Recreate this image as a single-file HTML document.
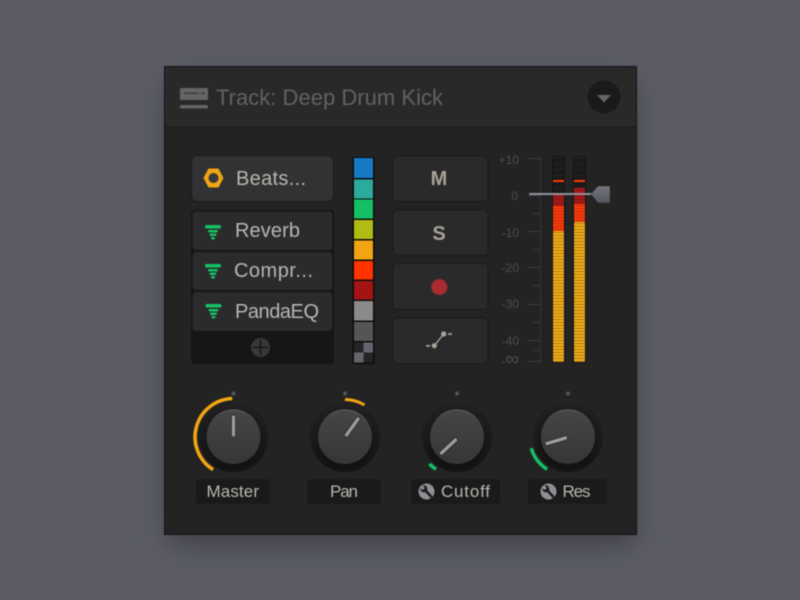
<!DOCTYPE html>
<html><head><meta charset="utf-8"><style>
html,body{margin:0;padding:0;width:800px;height:600px;overflow:hidden;background:#5b5c65}
svg{display:block;filter:blur(.4px)}
text{font-family:"Liberation Sans",sans-serif}
</style></head><body>
<svg width="800" height="600" viewBox="0 0 800 600" xmlns="http://www.w3.org/2000/svg">
<defs>
<filter id="ps" x="-30%" y="-30%" width="160%" height="160%"><feGaussianBlur stdDeviation="14"/></filter>
<filter id="ks" x="-40%" y="-40%" width="180%" height="180%"><feGaussianBlur stdDeviation="3"/></filter>
<linearGradient id="kn" x1="0" y1="0" x2="0" y2="1"><stop offset="0" stop-color="#464648"/><stop offset="1" stop-color="#363638"/></linearGradient>
<linearGradient id="rim" x1="0" y1="0" x2="0" y2="1"><stop offset="0" stop-color="#66666a"/><stop offset=".3" stop-color="#464648" stop-opacity="0"/></linearGradient>
<linearGradient id="ring" x1="0" y1="0" x2="0" y2="1"><stop offset="0" stop-color="#212122"/><stop offset="1" stop-color="#141415"/></linearGradient>
<linearGradient id="hd" x1="0" y1="0" x2="0" y2="1"><stop offset="0" stop-color="#74757e"/><stop offset="1" stop-color="#55565e"/></linearGradient>
<pattern id="po" width="3" height="3" patternUnits="userSpaceOnUse" y="1"><rect width="3" height="3" fill="#f5ac14"/><rect width="3" height="1" fill="#a87a24"/></pattern>
<pattern id="pr" width="3" height="3" patternUnits="userSpaceOnUse" y="1"><rect width="3" height="3" fill="#ff3a08"/><rect width="3" height="1" fill="#b8300c"/></pattern>
<pattern id="pd" width="3" height="3" patternUnits="userSpaceOnUse" y="1"><rect width="3" height="3" fill="#a8181a"/><rect width="3" height="1" fill="#801818"/></pattern>
<pattern id="pk" width="3" height="6" patternUnits="userSpaceOnUse" y="1"><rect width="3" height="6" fill="#1a1a1a"/><rect width="3" height="1" fill="#262626"/></pattern>
</defs>

<rect x="168" y="82" width="466" height="462" fill="#000" opacity=".32" filter="url(#ps)"/>
<rect x="164.500" y="66.500" width="472" height="468" fill="#232323" stroke="#141414"/>
<rect x="165" y="67" width="471" height="60" fill="#29292a"/>
<rect x="165" y="127" width="471" height="1" fill="#181818"/>

<!-- header -->
<rect x="180" y="88" width="28" height="12" rx="1.500" fill="#646466"/>
<rect x="184" y="92.500" width="15" height="1.500" fill="#3c3c3e"/><rect x="201" y="92.500" width="4" height="1.500" fill="#3c3c3e"/>
<rect x="180" y="105" width="28" height="3.500" rx="1.500" fill="#646466"/>
<text x="216" y="105" font-size="22" fill="#626260" textLength="227" lengthAdjust="spacing">Track: Deep Drum Kick</text>
<circle cx="604" cy="97" r="16.500" fill="#1a1a1b"/>
<path d="M597 95H611L604 102.500Z" fill="#666"/>

<!-- beats -->
<rect x="191.500" y="155.500" width="142" height="46" rx="5" fill="#323234" stroke="#1a1a1a"/>
<path d="M203.500 178L208.500 168.500H218.500L223.500 178L218.500 187.500H208.500Z" fill="#eea414"/>
<circle cx="213.500" cy="178" r="5" fill="#38383a"/>
<text x="236" y="185" font-size="20" fill="#b9b6ae" textLength="70">Beats...</text>

<!-- fx list -->
<rect x="191" y="210" width="143" height="154" rx="4" fill="#161616"/>
<rect x="192.500" y="211.500" width="140" height="38.500" rx="4" fill="#2b2b2d"/>
<rect x="192.500" y="252" width="140" height="38" rx="4" fill="#2b2b2d"/>
<rect x="192.500" y="292" width="140" height="39" rx="4" fill="#2b2b2d"/>
<g fill="#16c064">
<g transform="translate(0,225)"><rect x="205" y="0" width="16" height="3.500" rx="1.500"/><rect x="208" y="5" width="10" height="2.500" rx="1.200"/><rect x="209.500" y="8.500" width="7" height="2.500" rx="1.200"/><rect x="211" y="12" width="4" height="2.500" rx="1.200"/></g>
<g transform="translate(0,264)"><rect x="205" y="0" width="16" height="3.500" rx="1.500"/><rect x="208" y="5" width="10" height="2.500" rx="1.200"/><rect x="209.500" y="8.500" width="7" height="2.500" rx="1.200"/><rect x="211" y="12" width="4" height="2.500" rx="1.200"/></g>
<g transform="translate(0,304)"><rect x="205.500" y="0" width="16" height="3.500" rx="1.500"/><rect x="208.500" y="5" width="10" height="2.500" rx="1.200"/><rect x="210" y="8.500" width="7" height="2.500" rx="1.200"/><rect x="211.500" y="12" width="4" height="2.500" rx="1.200"/></g>
</g>
<g font-size="20" fill="#b9b6ae">
<text x="235" y="237" textLength="65">Reverb</text>
<text x="234" y="277" textLength="79">Compr...</text>
<text x="235" y="318" textLength="84">PandaEQ</text>
</g>
<circle cx="260.500" cy="347.500" r="9.500" fill="#38383a"/>
<path d="M260.500 340V355M253 347.500H268" stroke="#161616" stroke-width="1.500"/>

<!-- swatches -->
<rect x="352.500" y="157" width="22" height="207" rx="1" fill="#0c0c0c"/>
<rect x="354" y="158" width="19" height="20" fill="#1579c4"/>
<rect x="354" y="179.500" width="19" height="19" fill="#2bab9b"/>
<rect x="354" y="199.500" width="19" height="19" fill="#14bf66"/>
<rect x="354" y="220" width="19" height="19" fill="#b0bb14"/>
<rect x="354" y="240.500" width="19" height="19" fill="#f2a512"/>
<rect x="354" y="261" width="19" height="18.500" fill="#ff3200"/>
<rect x="354" y="281" width="19" height="18.500" fill="#a51414"/>
<rect x="354" y="301" width="19" height="19.500" fill="#8a8a8a"/>
<rect x="354" y="322" width="19" height="19" fill="#555555"/>
<rect x="354" y="342.500" width="19" height="20" fill="#252525"/>
<rect x="363.500" y="342.500" width="9.500" height="10" fill="#65656e"/>
<rect x="354" y="352.500" width="9.500" height="10" fill="#65656e"/>

<!-- buttons -->
<g fill="#2a2a2c" stroke="#1a1a1a">
<rect x="393" y="156" width="95" height="45.500" rx="4"/>
<rect x="393" y="210" width="95" height="45.500" rx="4"/>
<rect x="393" y="263.500" width="95" height="46" rx="4"/>
<rect x="393" y="318" width="95" height="45.500" rx="4"/>
</g>
<text x="439" y="185" font-size="20" font-weight="700" fill="#a8a297" text-anchor="middle">M</text>
<text x="439" y="240" font-size="20" font-weight="700" fill="#a8a297" text-anchor="middle">S</text>
<circle cx="439.300" cy="287" r="8" fill="#a92c31"/>
<g fill="#a8a297">
<circle cx="434.300" cy="345.700" r="2.600"/><circle cx="443.700" cy="334" r="2.600"/>
<rect x="426" y="345" width="4" height="1.700"/><rect x="448" y="333.200" width="4" height="1.700"/>
</g>
<path d="M434.300 345.700L443.700 334" stroke="#a8a297" stroke-width="1.300"/>

<!-- scale -->
<g fill="none">
<path d="M540.500 158V361.500" stroke="#343434"/>
<path d="M528 158.500H541M528 195.500H541M528 231.500H541M528 267.500H541M528 304.500H541M528 340.500H541M528 361.500H541" stroke="#3c3c3c"/>
<path d="M533 213.500H540M533 249.500H540M533 285.500H540M533 322.500H540M533 350.500H540" stroke="#3c3c3c"/>
</g>
<g font-size="12" fill="#4e4e4e" text-anchor="end">
<text x="519" y="164">+10</text>
<text x="518" y="200">0</text>
<text x="519" y="237">-10</text>
<text x="519" y="272">-20</text>
<text x="519" y="308">-30</text>
<text x="519" y="345">-40</text>
<text x="519" y="365">-<tspan font-size="19">∞</tspan></text>
</g>

<!-- meters -->
<rect x="552" y="156" width="13" height="207" rx="2" fill="#131313"/>
<rect x="573" y="156" width="13" height="207" rx="2" fill="#131313"/>
<rect x="553" y="157" width="11" height="38" fill="url(#pk)"/>
<rect x="574" y="157" width="11" height="31" fill="url(#pk)"/>
<rect x="553" y="180" width="11" height="2" fill="#ff3a08"/>
<rect x="574" y="180" width="11" height="2" fill="#ff3a08"/>
<rect x="553" y="195" width="11" height="11" fill="url(#pd)"/>
<rect x="553" y="206" width="11" height="25" fill="url(#pr)"/>
<rect x="553" y="231" width="11" height="131" rx="1" fill="url(#po)"/>
<rect x="574" y="188" width="11" height="16" fill="url(#pd)"/>
<rect x="574" y="204" width="11" height="18" fill="url(#pr)"/>
<rect x="574" y="222" width="11" height="140" rx="1" fill="url(#po)"/>

<!-- fader -->
<rect x="529" y="193" width="64" height="2" rx="1" fill="#8f949c"/>
<path d="M591 194L597.500 186.500Q598 186 599 186H610V203H599Q598 203 597.500 202.500Z" fill="url(#hd)" stroke="#2a2a2c" stroke-width=".5"/>

<!-- knobs -->
<g fill="#55555b"><circle cx="233.500" cy="393.500" r="2"/><circle cx="345" cy="393.500" r="2"/><circle cx="457" cy="393.500" r="2"/><circle cx="568" cy="393.500" r="2"/></g>
<g fill="url(#ring)">
<circle cx="233.500" cy="437" r="35"/><circle cx="345" cy="437" r="35"/><circle cx="457" cy="437" r="35"/><circle cx="568" cy="437" r="35"/>
</g>
<g fill="#000" opacity=".3" filter="url(#ks)">
<circle cx="233.500" cy="440" r="27"/><circle cx="345" cy="440" r="27"/><circle cx="457" cy="440" r="27"/><circle cx="568" cy="440" r="27"/>
</g>
<g fill="url(#kn)" stroke="url(#rim)">
<circle cx="233.500" cy="437" r="27"/><circle cx="345" cy="437" r="27"/><circle cx="457" cy="437" r="27"/><circle cx="568" cy="437" r="27"/>
</g>
<g fill="none" stroke-width="3.500">
<path d="M232.200 398.500A38.500 38.500 0 0 0 213.100 469.600" stroke="#f2a512"/>
<path d="M345 399.500A38 38 0 0 1 364.500 405" stroke="#f2a512" stroke-width="3"/>
<path d="M429.500 464A38.500 38.500 0 0 0 436 469.300" stroke="#14bf66"/>
<path d="M531.200 448.300A38.500 38.500 0 0 0 547 469.300" stroke="#14bf66"/>
</g>
<g stroke="#1f1f20" stroke-width="5" stroke-linecap="round" opacity=".7">
<path d="M233.500 417V435"/>
<path d="M358 419L346.500 435"/>
<path d="M455.500 440L441.500 453"/>
<path d="M565.500 438L547 443.500"/>
</g>
<g stroke="#9c9c9c" stroke-width="3.300" stroke-linecap="round">
<path d="M233.500 417V435"/>
<path d="M358 419L346.500 435"/>
<path d="M455.500 440L441.500 453"/>
<path d="M565.500 438L547 443.500"/>
</g>

<!-- labels -->
<g fill="#1a1a1b">
<rect x="196" y="479" width="74" height="25" rx="3"/>
<rect x="307" y="479" width="74" height="25" rx="3"/>
<rect x="411" y="479" width="89" height="25" rx="3"/>
<rect x="528" y="479" width="79" height="25" rx="3"/>
</g>
<g font-size="17" fill="#b9b6ae">
<text x="206.500" y="497" textLength="52.500">Master</text>
<text x="330" y="497" textLength="28">Pan</text>
<text x="441" y="497" textLength="49">Cutoff</text>
<text x="562.500" y="497" textLength="28">Res</text>
</g>
<g>
<circle cx="426.500" cy="491.500" r="8" fill="#8f8f95"/>
<path d="M424.500 489.500L431 496.500" stroke="#1a1a1b" stroke-width="2.600" stroke-linecap="round"/>
<circle cx="423.800" cy="488.800" r="3.500" fill="#1a1a1b"/>
<path d="M422.500 485L425 488.500L422 490L419.500 487Z" fill="#8f8f95"/>
<circle cx="548.500" cy="491.500" r="8" fill="#8f8f95"/>
<path d="M546.500 489.500L553 496.500" stroke="#1a1a1b" stroke-width="2.600" stroke-linecap="round"/>
<circle cx="545.800" cy="488.800" r="3.500" fill="#1a1a1b"/>
<path d="M544.500 485L547 488.500L544 490L541.500 487Z" fill="#8f8f95"/>
</g>
</svg>
</body></html>
